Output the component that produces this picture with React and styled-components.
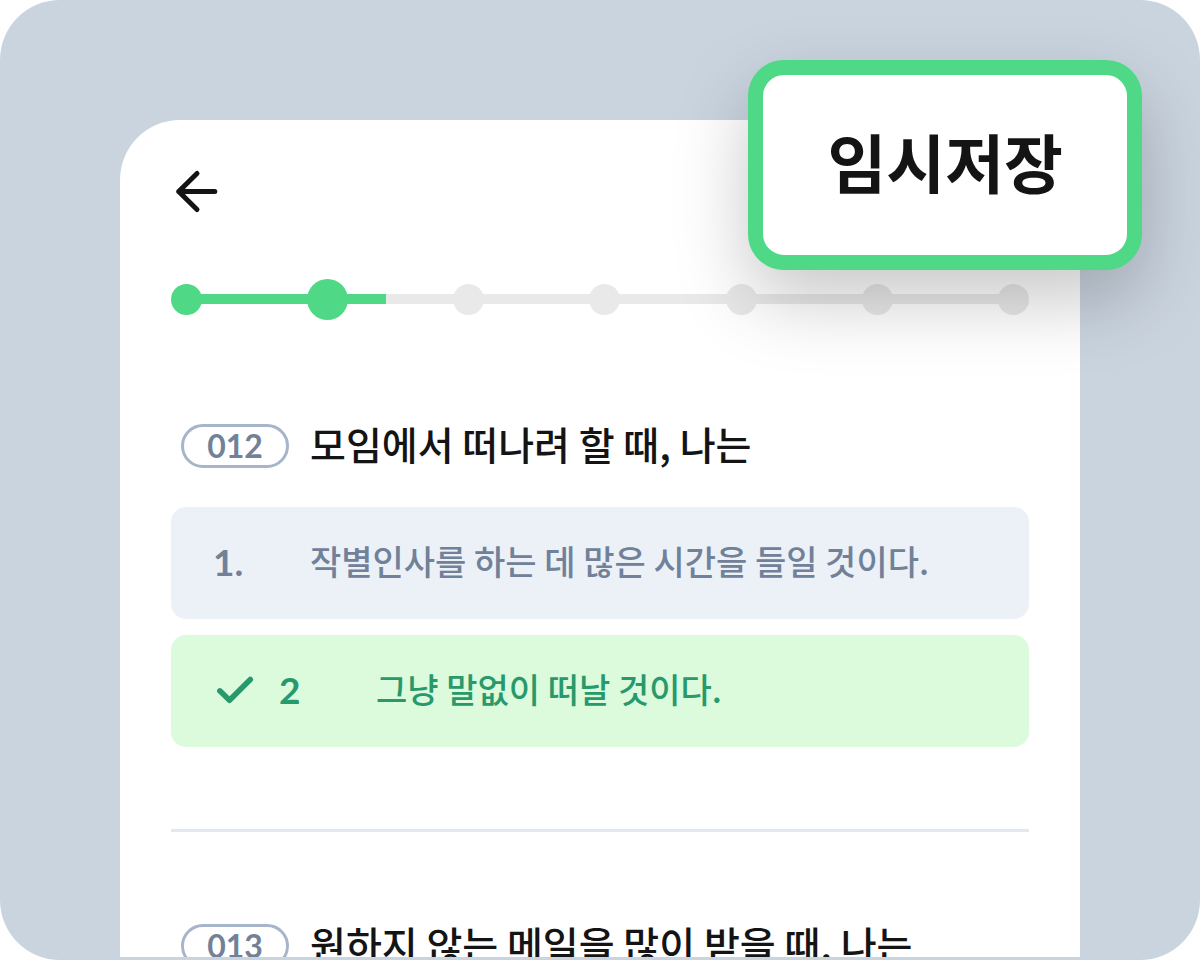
import React, { useState } from "react";
import styled, { createGlobalStyle } from "styled-components";

const GlobalStyle = createGlobalStyle`
  *, *::before, *::after { box-sizing: border-box; }
  body {
    margin: 0;
    background: #ffffff;
    color: #141414;
    font-family: "Noto Sans CJK KR", sans-serif;
  }
`;

const Stage = styled.div`
  position: relative;
  height: 100vh;
  padding: 120px 10% 3px;
  border-radius: 60px;
  background: #cad4df;
  overflow: hidden;
`;

const Sheet = styled.main`
  height: 100%;
  padding: 48px 51px 0;
  border-radius: 60px 60px 0 0;
  background: #ffffff;
  overflow: hidden;
`;

const BackButton = styled.button`
  display: block;
  width: 48px;
  height: 48px;
  padding: 0;
  border: 0;
  background: none;
  color: #141414;
  cursor: pointer;

  svg { display: block; }
`;

const SaveButton = styled.button`
  position: absolute;
  top: 60px;
  right: 58px;
  height: 210px;
  padding: 0 64px 10px;
  border: 15px solid #4fd885;
  border-radius: 36px;
  background: #ffffff;
  box-shadow: 0 30px 75px rgba(0, 0, 0, 0.22);
  color: #141414;
  font: 700 64px/96px "Noto Sans CJK KR", sans-serif;
  white-space: nowrap;
  cursor: pointer;
`;

const Steps = styled.ol`
  display: flex;
  align-items: center;
  justify-content: space-between;
  height: 42px;
  margin: 62px 0 0;
  padding: 0;
  list-style: none;
  background: linear-gradient(to right, #4fd885 calc(25% - 7px), #e9e9e9 calc(25% - 7px)) center / calc(100% - 30px) 10px no-repeat;
`;

const Step = styled.li`
  width: ${({ $current }) => ($current ? 41 : 31)}px;
  height: ${({ $current }) => ($current ? 41 : 31)}px;
  border-radius: 50%;
  background: ${({ $reached }) => ($reached ? "#4fd885" : "#e9e9e9")};
`;

const Question = styled.section`
  margin-top: ${({ $first }) => ($first ? 96 : 84)}px;
`;

const QuestionHead = styled.div`
  display: flex;
  align-items: center;
  gap: 21px;
  height: 60px;
  padding-left: 10px;
`;

const Badge = styled.span`
  display: flex;
  align-items: center;
  justify-content: center;
  width: 108px;
  height: 44px;
  border: 3px solid #a6b5c9;
  border-radius: 22px;
  color: #718199;
  font: 700 32px/40px Lato, sans-serif;
`;

const Title = styled.h2`
  margin: 0;
  padding-bottom: 6px;
  font-size: 39px;
  font-weight: 500;
  line-height: 54px;
  white-space: nowrap;
`;

const Options = styled.div`
  display: flex;
  flex-direction: column;
  gap: 16px;
  margin-top: 31px;
`;

const Option = styled.label`
  display: flex;
  align-items: center;
  height: 112px;
  padding: 0 42px 4px;
  border-radius: 15px;
  background: ${({ $checked }) => ($checked ? "#dcfbdd" : "#ebf1f6")};
  color: ${({ $checked }) => ($checked ? "#28996a" : "#718199")};
  font-size: 34px;
  font-weight: 500;
  line-height: 52px;
  white-space: nowrap;
  cursor: pointer;

  svg { flex: none; margin-right: 24px; }
`;

const Radio = styled.input`
  appearance: none;
  position: absolute;
  width: 1px;
  height: 1px;
  margin: 0;
  opacity: 0;
`;

const Num = styled.span`
  flex: none;
  width: 97px;
  padding-top: 2px;
  font: 700 37px/52px Lato, sans-serif;
`;

const Divider = styled.hr`
  height: 3px;
  margin: 82px 0 0;
  border: 0;
  background: #e2e8f1;
`;

const BackIcon = () => (
  <svg width="48" height="48" viewBox="0 0 48 48" fill="none" stroke="currentColor" strokeWidth="5" strokeLinecap="round" strokeLinejoin="round" aria-hidden="true">
    <path d="M43.800 23.500H7.700M26 5.500L7.700 23.500L26 41.500M9.500 23.500L12 21.800V25.200Z" />
  </svg>
);

const CheckIcon = () => (
  <svg width="42" height="42" viewBox="0 0 42 42" fill="none" stroke="currentColor" strokeWidth="5.500" strokeLinecap="round" strokeLinejoin="round" aria-hidden="true">
    <path d="M6.800 22.800L16.500 32.300L37.300 11.500" />
  </svg>
);

const STEPS = [1, 2, 3, 4, 5, 6, 7];
const CURRENT_STEP = 2;

const ANSWERS = [
  { id: 1, text: "작별인사를 하는 데 많은 시간을 들일 것이다." },
  { id: 2, text: "그냥 말없이 떠날 것이다." },
];

export default function App() {
  const [picked, setPicked] = useState(2);

  return (
    <>
      <GlobalStyle />
      <Stage>
        <Sheet>
          <BackButton type="button" aria-label="뒤로">
            <BackIcon />
          </BackButton>
          <Steps>
            {STEPS.map((n) => (
              <Step key={n} $reached={n <= CURRENT_STEP} $current={n === CURRENT_STEP} />
            ))}
          </Steps>

          <Question $first>
            <QuestionHead>
              <Badge>012</Badge>
              <Title id="q012">모임에서 떠나려 할 때, 나는</Title>
            </QuestionHead>
            <Options role="radiogroup" aria-labelledby="q012">
              {ANSWERS.map(({ id, text }) => {
                const checked = picked === id;
                return (
                  <Option key={id} $checked={checked}>
                    <Radio type="radio" name="q012" checked={checked} onChange={() => setPicked(id)} />
                    {checked && <CheckIcon />}
                    <Num>{checked ? id : `${id}.`}</Num>
                    <span>{text}</span>
                  </Option>
                );
              })}
            </Options>
          </Question>

          <Divider />

          <Question>
            <QuestionHead>
              <Badge>013</Badge>
              <Title>원하지 않는 메일을 많이 받을 때, 나는</Title>
            </QuestionHead>
          </Question>
        </Sheet>
        <SaveButton type="button">임시저장</SaveButton>
      </Stage>
    </>
  );
}
